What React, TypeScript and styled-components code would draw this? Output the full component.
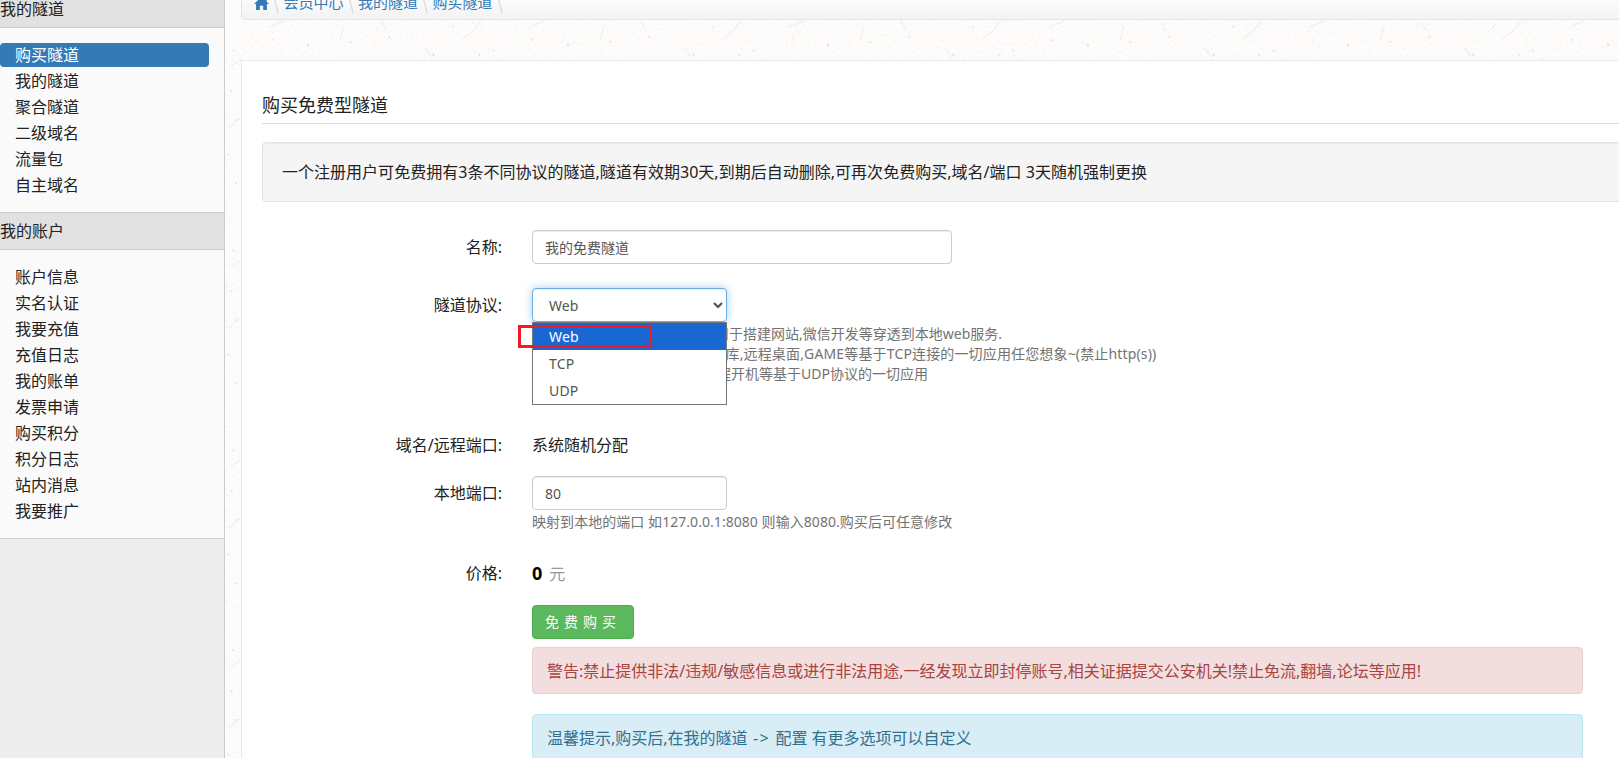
import React from "react";
import styled, { createGlobalStyle } from "styled-components";

const Global = createGlobalStyle`
  * { box-sizing: border-box; }
  body { margin: 0; overflow: hidden; background: #fefdfc; color: #222;
    font-family: "Noto Sans", "Noto Sans CJK SC", sans-serif; font-size: 16px; line-height: 24px; }
  a { text-decoration: none; color: inherit; }
`;
const Page = styled.div`position: relative; display: flex; width: 1619px; height: 758px; overflow: hidden;`;
const Texture = styled.svg`position: absolute; inset: 0; width: 100%; height: 100%; z-index: -1;`;
const Sidebar = styled.nav`flex: 0 0 225px; background: #ededed; border-right: 1px solid #ccc;`;
const GroupTitle = styled.h3<{ $cut?: boolean }>`
  margin: ${(p) => (p.$cut ? "-10px" : "0")} 0 0; height: 38px; font-size: 16px; font-weight: 400; line-height: 36px;
  background: #e1e1e1; border-top: 1px solid #ccc; border-bottom: 1px solid #ccc;
`;
const Menu = styled.ul<{ $last?: boolean }>`
  list-style: none; margin: 0; padding: 15px 15px 15px 0; background: #fafafa;
  display: flex; flex-direction: column; gap: 2px;
  ${(p) => p.$last && "border-bottom: 1px solid #ccc;"}
`;
const MenuItem = styled.li<{ $active?: boolean }>`
  height: 24px; line-height: 25px; padding-left: 15px; border-radius: 4px;
  ${(p) => p.$active && "background: #337ab7; color: #fff;"}
`;
const Main = styled.main`flex: 1; min-width: 0; padding-left: 16px;`;
const Crumbs = styled.div`
  height: 32px; margin: -12px 0 0; padding: 0 0 4px 12px; display: flex; align-items: center; font-size: 15px; color: #337ab7;
  width: 1420px; border: 1px solid #e5e5e5; border-radius: 4px; background: linear-gradient(#fff, #f3f3f3);
`;
const Home = styled.svg`width: 15px; height: 15px; fill: #337ab7; margin-top: 2px;`;
const Sep = styled.svg`width: 14.5px; height: 22px; margin-top: 2px; fill: none; stroke: #d9d9d9; stroke-width: 1.2;`;
const Panel = styled.section`
  margin-top: 40px; width: 1420px; height: 720px; padding: 30px 20px 0; background: #fff; border: 1px solid #e9e9e9;
`;
const Title = styled.h2`margin: 0; height: 33px; font-size: 18px; line-height: 28px; font-weight: 400; border-bottom: 1px solid #ddd;`;
const Well = styled.div`
  margin-top: 18px; height: 60px; padding: 17px 19px; border: 1px solid #e3e3e3; border-radius: 4px; background: #f5f5f5;
  box-shadow: inset 0 1px 1px rgba(0,0,0,.05); letter-spacing: 0.02px;
`;
const Row = styled.div<{ $top: number }>`display: flex; margin-top: ${(p) => p.$top}px;`;
const Label = styled.label`flex: 0 0 240px; margin-right: 30px; text-align: right; line-height: 34px;`;
const Field = styled.div`position: relative; line-height: 34px; flex: 0 0 1051px;`;
const Input = styled.div<{ $w: number; $focus?: boolean }>`
  display: flex; align-items: center; justify-content: space-between; width: ${(p) => p.$w}px; height: 34px;
  padding: 1px ${(p) => (p.$focus ? "3px 0 16px" : "12px 0")}; font-size: 14px; color: #555; background: #fff;
  border: 1px solid ${(p) => (p.$focus ? "#66afe9" : "#ccc")}; border-radius: 4px;
  box-shadow: inset 0 1px 1px rgba(0,0,0,.075)${(p) => (p.$focus ? ", 0 0 8px rgba(102,175,233,.6)" : "")};
`;
const Arrow = styled.svg`width: 10px; height: 7px; fill: none; stroke: #555; stroke-width: 2.2;`;
const Help = styled.div<{ $indent?: number; $track?: number }>`
  padding-left: ${(p) => p.$indent ?? 0}px; font-size: 14px; line-height: 20px; color: #737373; white-space: nowrap;
  letter-spacing: ${(p) => p.$track ?? 0}px;
`;
const HelpBlock = styled.div`padding-top: 2px;`;
const Options = styled.div`
  position: absolute; top: 34px; left: 0; width: 195px; background: #fff; border: 1px solid #767676;
`;
const Option = styled.div<{ $on?: boolean }>`
  height: 27px; padding-left: 16px; font-size: 14px; line-height: 27px; letter-spacing: 0.2px;
  color: ${(p) => (p.$on ? "#fff" : "#555")}; background: ${(p) => (p.$on ? "#1967d2" : "#fff")};
`;
const Mark = styled.div`position: absolute; top: 37px; left: -14px; width: 134px; height: 23px; border: 3px solid #ed1c24;`;
const Price = styled.b`font-size: 18px; color: #000; margin-right: 7px;`;
const Unit = styled.span`color: #999;`;
const Buy = styled.button`
  display: block; height: 34px; width: 102px; padding: 0 0 0 12px; text-align: left; font: 14px/20px "Noto Sans", "Noto Sans CJK SC", sans-serif;
  letter-spacing: 5px; color: #fff; background: #5cb85c; border: 1px solid #4cae4c; border-radius: 4px; white-space: nowrap;
`;
const Alert = styled.div<{ $info?: boolean }>`
  height: 47px; margin-top: ${(p) => (p.$info ? 20 : 8)}px; padding: 0 14px; line-height: 46px; border-radius: 4px;
  color: ${(p) => (p.$info ? "#31708f" : "#a94442")}; background: ${(p) => (p.$info ? "#d9edf7" : "#f2dede")};
  border: 1px solid ${(p) => (p.$info ? "#bce8f1" : "#ebccd1")};
`;
const Path = styled.span`letter-spacing: 1.3px;`;

const tunnels = ["购买隧道", "我的隧道", "聚合隧道", "二级域名", "流量包", "自主域名"];
const account = ["账户信息", "实名认证", "我要充值", "充值日志", "我的账单", "发票申请", "购买积分", "积分日志", "站内消息", "我要推广"];
const crumbs = ["会员中心", "我的隧道", "购买隧道"];

const Slash = () => <Sep viewBox="0 0 14.5 22"><path d="M4 1l5 20" /></Sep>;

export default function App() {
  return (
    <Page>
      <Global />
      <Texture>
        <defs>
          <filter id="paper" x="0" y="0" width="100%" height="100%">
            <feTurbulence type="fractalNoise" baseFrequency="0.35" numOctaves="3" seed="7" />
            <feColorMatrix values="0 0 0 0 0.5  0 0 0 0 0.48  0 0 0 0 0.46  0.5 0 0 0 -0.2" />
          </filter>
          <pattern id="flecks" width="260" height="200" patternUnits="userSpaceOnUse">
            <g fill="none" stroke="#a09c96" strokeLinecap="round">
              <g strokeOpacity=".11" strokeWidth="1.4">
                <path d="M203 39l10-8 8-10M165 48l6 9M231 66l12-7M229 128l10-9M228 207l8 7M10 27l14-6M84 26l-4 14M121 22l5 8" />
              </g>
              <g strokeOpacity=".5">
                <path d="M12 40h.7M48 44v2M90 42h.8M129 37h.8M219 55h.8M173 54l1 2M193 27h.6M233 50l1 1M236 120h.8M228 154l1 1M236 183h.8M231 91h1" />
              </g>
            </g>
          </pattern>
        </defs>
        <rect width="100%" height="100%" filter="url(#paper)" opacity="0.4" />
        <rect width="100%" height="100%" fill="url(#flecks)" />
      </Texture>
      <Sidebar>
        <GroupTitle $cut>我的隧道</GroupTitle>
        <Menu>{tunnels.map((t, i) => <MenuItem key={t} $active={i === 0}>{t}</MenuItem>)}</Menu>
        <GroupTitle>我的账户</GroupTitle>
        <Menu $last>{account.map((t) => <MenuItem key={t}>{t}</MenuItem>)}</Menu>
      </Sidebar>
      <Main>
        <Crumbs>
          <Home viewBox="0 0 16 16"><path d="M8 1 0 8.600h2.200V15h4v-4.500h3.600V15h4V8.600H16L13.500 6V2h-2v2.200z" /></Home>
          {crumbs.map((c) => <React.Fragment key={c}><Slash /><a>{c}</a></React.Fragment>)}
          <Slash />
        </Crumbs>
        <Panel>
          <Title>购买免费型隧道</Title>
          <Well>一个注册用户可免费拥有3条不同协议的隧道,隧道有效期30天,到期后自动删除,可再次免费购买,域名/端口 3天随机强制更换</Well>
          <Row $top={28}><Label>名称:</Label><Field><Input $w={420}>我的免费隧道</Input></Field></Row>
          <Row $top={24}>
            <Label>隧道协议:</Label>
            <Field>
              <Input $w={195} $focus>Web<Arrow viewBox="0 0 10 7"><path d="M1 1l4 4 4-4" /></Arrow></Input>
              <HelpBlock>
                <Help $indent={183}>用于搭建网站,微信开发等穿透到本地web服务.</Help>
                <Help $indent={193.5} $track={0.15}>库,远程桌面,GAME等基于TCP连接的一切应用任您想象~(禁止http(s))</Help>
                <Help $indent={185}>程开机等基于UDP协议的一切应用</Help>
              </HelpBlock>
              <Options><Option $on>Web</Option><Option>TCP</Option><Option>UDP</Option></Options>
              <Mark />
            </Field>
          </Row>
          <Row $top={44}><Label>域名/远程端口:</Label><Field>系统随机分配</Field></Row>
          <Row $top={14}>
            <Label>本地端口:</Label>
            <Field>
              <Input $w={195}>80</Input>
              <HelpBlock><Help $track={0.05}>映射到本地的端口 如127.0.0.1:8080 则输入8080.购买后可任意修改</Help></HelpBlock>
            </Field>
          </Row>
          <Row $top={24}><Label>价格:</Label><Field><Price>0</Price><Unit>元</Unit></Field></Row>
          <Row $top={14}>
            <Label />
            <Field>
              <Buy>免费购买</Buy>
              <Alert>警告:禁止提供非法/违规/敏感信息或进行非法用途,一经发现立即封停账号,相关证据提交公安机关!禁止免流,翻墙,论坛等应用!</Alert>
              <Alert $info>温馨提示,购买后,在我的隧道<Path> -&gt; </Path>配置 有更多选项可以自定义</Alert>
            </Field>
          </Row>
        </Panel>
      </Main>
    </Page>
  );
}
